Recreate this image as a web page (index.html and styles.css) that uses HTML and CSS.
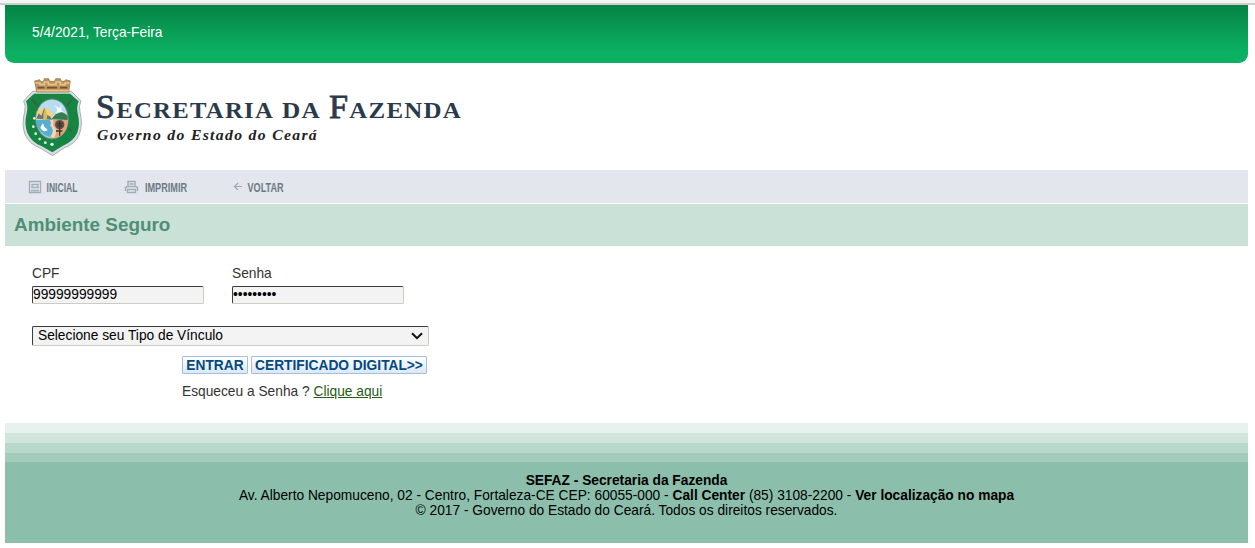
FILE: index.html
```html
<!DOCTYPE html>
<html lang="pt-BR">
<head>
<meta charset="utf-8">
<title>Ambiente Seguro</title>
<link rel="stylesheet" href="styles.css">
</head>
<body>
<div class="topline"></div>
<div class="page">
  <header class="datebar">5/4/2021, Terça-Feira</header>
  <div class="brand">
    <svg class="crest" width="80" height="92" viewBox="0 0 240 276">
      <path d="M29 93L56 64H172L201 93Q193 108 198 126Q207 164 196 193Q184 222 150 234L116 257L80 235Q45 222 33 193Q22 163 32 126Q37 108 29 93Z" fill="#d7dce2" stroke="#a9aeb6" stroke-width="3"/>
      <path d="M36 94L60 71H168L194 94Q187 110 191 130Q199 163 190 188Q178 214 147 227L115 247L82 228Q51 215 40 188Q30 163 38 130Q43 110 36 94Z" fill="#168542"/>
      <path d="M53 87L73 109M176 87L158 107M174 184L157 170" stroke="#3a5f45" stroke-width="5"/>
      <path d="M62 33L77 29L80 35H88L91 26H104L107 34H122L125 26H139L142 34H151L155 29L169 33L164 66H68Z" fill="#bd955b" stroke="#8d6538" stroke-width="2"/>
      <path d="M64 39H78V44H91V36H103V44H126V36H139V44H153V39H167M68 62H164" fill="none" stroke="#e3c391" stroke-width="5"/>
      <path d="M71 53H91M99 53H129M138 53H160" stroke="#76502f" stroke-width="5"/>
      <ellipse cx="114" cy="147" rx="49" ry="60" fill="#a2cfdd" stroke="#6a8173" stroke-width="3"/>
      <path d="M67 143Q72 96 111 89Q147 88 159 131L151 150H68Z" fill="#b9dcf0"/>
      <path d="M68 125Q98 100 120 137L111 150H67Z" fill="#f2d37b"/>
      <path d="M67 146L74 130L82 137L91 113L98 135L108 139L114 149Z" fill="#66748b"/>
      <path d="M88 148V132L93 114L99 132V148" fill="#d9bd55"/>
      <path d="M112 148L125 133L145 125L161 137V150Z" fill="#387d4b"/>
      <path d="M66 150H115Q107 164 120 177Q116 191 118 203Q71 196 66 150Z" fill="#54afd2"/>
      <path d="M111 150H162Q162 194 124 205L106 200Q127 185 111 168Z" fill="#dfa579"/>
      <path d="M107 150Q115 160 108 166Q124 178 110 201L121 204Q133 180 117 166Q121 157 117 150Z" fill="#efd8b3"/>
      <path d="M83 165Q88 154 90 169L101 180Q92 188 84 179L79 174Z" fill="#fff"/>
      <path d="M122 106L135 115L144 104L141 119L151 128L136 125L126 130L130 119Z" fill="#f5faff"/>
      <circle cx="137" cy="164" r="14" fill="#675046"/>
      <path d="M137 154V197M129 159L145 170M129 170L145 159M126 183H145" stroke="#3c3934" stroke-width="4"/>
      <g fill="#e8f4e9"><circle cx="61" cy="145" r="4"/><circle cx="58" cy="170" r="4"/><circle cx="65" cy="191" r="4"/><circle cx="77" cy="207" r="4"/><circle cx="94" cy="218" r="4"/><circle cx="114" cy="223" r="5"/></g>
    </svg>
    <svg class="wordmark" width="380" height="65" viewBox="90 85 380 65">
      <g class="agency">
        <text x="96" y="118" textLength="178" lengthAdjust="spacingAndGlyphs"><tspan class="initial">S</tspan>ECRETARIA</text>
        <text x="282" y="118" textLength="39" lengthAdjust="spacingAndGlyphs">DA</text>
        <text x="329" y="118" textLength="133" lengthAdjust="spacingAndGlyphs"><tspan class="initial">F</tspan>AZENDA</text>
      </g>
      <text class="government" x="97" y="140" textLength="221" lengthAdjust="spacingAndGlyphs">Governo do Estado do Ceará</text>
    </svg>
  </div>
  <nav class="toolbar">
    <a class="tool home"><svg width="56" height="20" viewBox="0 -2 56 20">
      <path d="M1.5 2.5H12.5V13.5H1.5Z M4 5.5H10V8.5H4Z M3 11.5H11" fill="none" stroke="#a2adb6" stroke-width="1.3"/>
      <text x="18.5" y="12.8" textLength="31" lengthAdjust="spacingAndGlyphs">INICIAL</text></svg></a>
    <a class="tool print"><svg width="70" height="20" viewBox="0 -2 70 20">
      <path d="M4 8V2.5H11V8M5.5 5H9.5M1.5 12V8.5L3.5 7.5H11.5L13.5 8.5V12M3.5 10.5H11.5V13.5H3.5Z" fill="none" stroke="#a2adb6" stroke-width="1.4"/>
      <text x="21" y="12.8" textLength="42" lengthAdjust="spacingAndGlyphs">IMPRIMIR</text></svg></a>
    <a class="tool back"><svg width="56" height="20" viewBox="0 -2 56 20">
      <path d="M5 4L1.5 7.5L5 11M2 7.5H9" fill="none" stroke="#9ca8b1" stroke-width="1.2"/>
      <text x="14.5" y="12.8" textLength="36" lengthAdjust="spacingAndGlyphs">VOLTAR</text></svg></a>
  </nav>
  <h1 class="title">Ambiente Seguro</h1>
  <form class="login">
    <div class="fields">
      <label class="field">CPF<input class="control" type="text" value="99999999999"></label>
      <label class="field">Senha<input class="control" type="password" value="123456789"></label>
    </div>
    <div class="control selector"><span>Selecione seu Tipo de Vínculo</span><svg width="12" height="8" viewBox="0 0 12 8"><path d="M1 1.2L6 6.2L11 1.2" fill="none" stroke="#111" stroke-width="2"/></svg></div>
    <div class="actions"><button type="button" class="enter">ENTRAR</button><button type="button" class="certificate">CERTIFICADO DIGITAL&gt;&gt;</button></div>
    <p class="forgot">Esqueceu a Senha ? <a href="#">Clique aqui</a></p>
  </form>
  <footer class="footer">
    <b>SEFAZ - Secretaria da Fazenda</b><br>
    Av. Alberto Nepomuceno, 02 - Centro, Fortaleza-CE CEP: 60055-000 - <b>Call Center</b> (85) 3108-2200 - <b>Ver localização no mapa</b><br>
    © 2017 - Governo do Estado do Ceará. Todos os direitos reservados.
  </footer>
</div>
</body>
</html>
```
FILE: styles.css
```css
* { box-sizing: border-box; }
body { margin: 0; background: #fff; font: 13.75px/15px "Liberation Sans", Arial, sans-serif; color: #333; overflow: hidden; }
.topline { height: 5px; background: #f4f4f4; border-bottom: 2px solid #cecece; }
.page { width: 1243px; margin-left: 5px; }
.datebar { height: 58px; padding: 20px 27px; border-radius: 0 0 9px 9px; background: linear-gradient(#048345, #0cb062 80%); color: #fff; }
.brand { height: 107px; padding: 7px 0 0 9px; display: flex; align-items: flex-start; }
.crest { flex: none; }
.wordmark { margin: 15px 0 0 -4px; flex: none; overflow: visible; }
.agency { font: bold 24px "Liberation Serif", serif; fill: #2b3a4b; letter-spacing: 1.2px; }
.initial { font-size: 33px; font-weight: normal; stroke: #2b3a4b; stroke-width: .8px; }
.government { font: italic bold 15.5px "Liberation Serif", serif; fill: #222; letter-spacing: 1.3px; }
.toolbar { height: 33px; display: flex; align-items: center; padding: 1px 0 0 23px; background: #e3e6ec; }
.tool { height: 20px; display: block; }
.tool svg { display: block; overflow: visible; }
.tool text { font: bold 12.5px "Liberation Sans", sans-serif; fill: #6b7b86; }
.print { margin-left: 40px; }
.back { margin-left: 39px; }
.title { height: 42px; margin: 1px 0 0; padding: 9px 9px 0; background: #cae1d7; color: #508e77; font-size: 18.9px; line-height: 23px; }
.login { height: 177px; padding: 20px 27px 0; }
.fields { display: flex; gap: 28px; }
.field { width: 172px; }
.control { display: block; border: 1px solid #3c3c40; border-right-color: #ceccc0; border-bottom-color: #ceccc0; border-radius: 2px; background: #f3f3f3; color: #000; }
input.control { width: 172px; height: 18px; margin-top: 5px; padding: 0 0 1px; font: inherit; outline: none; }
.selector { width: 397px; height: 20px; margin-top: 22px; padding: 0 5px; display: flex; align-items: center; justify-content: space-between; }
.selector span { line-height: 18px; }
.actions { display: flex; gap: 3px; margin: 10px 0 0 150px; }
button { height: 18px; padding: 1px 0 0; border: 1px solid #a4bfdb; border-radius: 1px; background: linear-gradient(#fff, #dce8f7); color: #04497f; font: bold 13.75px/15px "Liberation Sans", Arial, sans-serif; white-space: nowrap; }
.enter { width: 66px; }
.certificate { width: 176px; }
.forgot { margin: 10px 0 0 150px; }
.forgot a { color: #2a5a18; }
.footer { height: 120px; padding-top: 50px; color: #000; text-align: center; background: linear-gradient(#e7f1ed 0 10px, #d0e5dc 10px 20px, #b8d8cc 20px 30px, #a3ccbb 30px 39px, #8bbeab 39px); }
```
